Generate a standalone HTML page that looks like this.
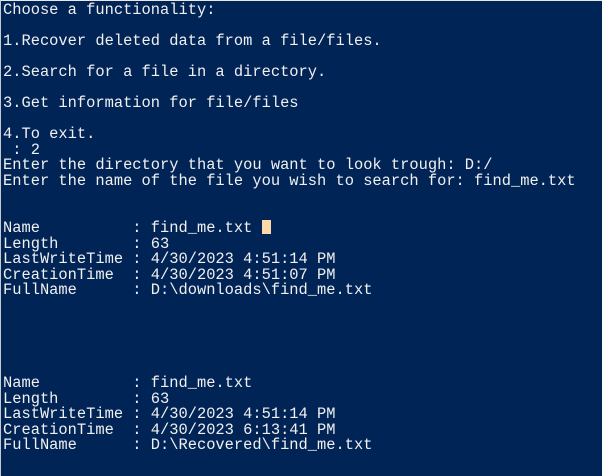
<!DOCTYPE html>
<html><head><style>
html,body{margin:0;padding:0;}
body{width:602px;height:476px;background:#012456;overflow:hidden;position:relative;border-top:1px solid #e8e8e8;border-left:1px solid #c8c8d0;box-sizing:border-box;}
pre{margin:0;position:absolute;left:2px;top:2px;font-family:"Liberation Mono",monospace;font-size:15.4px;line-height:15.5px;color:#f0f0f0;letter-spacing:0;}
.cur{display:inline-block;width:9px;height:14px;background:#fcd9a8;vertical-align:-2px;}
</style></head><body>
<pre>Choose a functionality:

1.Recover deleted data from a file/files.

2.Search for a file in a directory.

3.Get information for file/files

4.To exit.
 : 2
Enter the directory that you want to look trough: D:/
Enter the name of the file you wish to search for: find_me.txt


Name          : find_me.txt <span class="cur"></span>
Length        : 63
LastWriteTime : 4/30/2023 4:51:14 PM
CreationTime  : 4/30/2023 4:51:07 PM
FullName      : D:\downloads\find_me.txt





Name          : find_me.txt
Length        : 63
LastWriteTime : 4/30/2023 4:51:14 PM
CreationTime  : 4/30/2023 6:13:41 PM
FullName      : D:\Recovered\find_me.txt</pre>
</body></html>
